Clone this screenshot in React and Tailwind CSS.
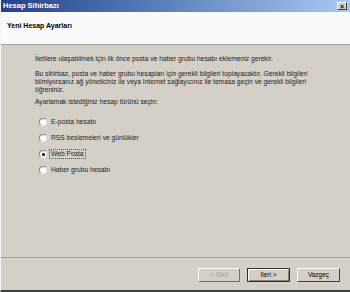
import React, { useState } from 'react';

const OPTIONS = [
  { value: 'email', label: 'E-posta hesabı' },
  { value: 'rss', label: 'RSS beslemeleri ve günlükler' },
  { value: 'web', label: 'Web Posta' },
  { value: 'news', label: 'Haber grubu hesabı' },
];

const Radio = ({ checked }) => (
  <span className="w-[8px] h-[8px] rounded-full bg-white border border-[#808080] border-r-[#e8e8e8] border-b-[#e8e8e8] flex items-center justify-center shrink-0">
    {checked && <span className="w-[3px] h-[3px] rounded-full bg-black" />}
  </span>
);

const App = () => {
  const [selected, setSelected] = useState('web');

  return (
    <div
      className="w-[350px] h-[292px] bg-[#d4d0c8] flex flex-col text-black border-b-2 border-b-[#404040] border-l border-l-[#f4f4f4]"
      style={{ fontFamily: '"Liberation Sans", Arial, sans-serif' }}
    >
      {/* Title bar */}
      <div className="h-[12px] bg-gradient-to-r from-[#23428a] to-[#a9caf0] flex items-center justify-between pl-[2px] pr-[3px]">
        <span className="text-[7.5px] font-bold text-white leading-none">Hesap Sihirbazı</span>
        <span className="w-[10px] h-[8px] bg-[#d4d0c8] border border-white border-r-[#404040] border-b-[#404040] flex items-center justify-center text-[7px] font-bold leading-none">
          ×
        </span>
      </div>

      {/* Header */}
      <div className="h-[33px] bg-[#fbfbfb] border-b border-b-[#a0a0a0] pl-[6px] pt-[10px] text-[7px] font-bold leading-[8px]">
        Yeni Hesap Ayarları
      </div>

      {/* Body */}
      <div className="flex-1 pl-[34px] pr-[38px] pt-[10px] text-[6.7px] leading-[8px] text-[#222]">
        <p>İletilere ulaşabilmek için ilk önce posta ve haber grubu hesabı eklemeniz gerekir.</p>
        <p className="mt-[7px]">
          Bu sihirbaz, posta ve haber grubu hesapları için gerekli bilgileri toplayacaktır. Gerekli bilgileri
          bilmiyorsanız ağ yöneticiniz ile veya Internet sağlayıcınız ile temasa geçin ve gerekli bilgileri
          öğreniniz.
        </p>
        <p className="mt-[4px]">Ayarlamak istediğiniz hesap türünü seçin:</p>

        <div className="mt-[12px] pl-[4px] flex flex-col gap-[8px]">
          {OPTIONS.map((o) => (
            <button
              key={o.value}
              type="button"
              onClick={() => setSelected(o.value)}
              className="flex items-center gap-[3px] text-left"
            >
              <Radio checked={selected === o.value} />
              <span
                className={`px-[1px] ${
                  selected === o.value ? 'outline outline-1 outline-dotted outline-[#555]' : ''
                }`}
              >
                {o.label}
              </span>
            </button>
          ))}
        </div>
      </div>

      {/* Footer */}
      <div className="h-[33px] border-t border-t-[#a0a0a0] flex items-center justify-end gap-[7px] pr-[10px] pt-[2px]">
        <button className="w-[42px] h-[14px] bg-[#d4d0c8] border border-white border-r-[#707070] border-b-[#707070] text-[6.5px] text-[#9a9a9a]">
          &lt; Geri
        </button>
        <button className="w-[43px] h-[14px] bg-[#d4d0c8] border border-[#303030] text-[6.5px] shadow-[inset_1px_1px_0_#fff,inset_-1px_-1px_0_#808080]">
          İleri &gt;
        </button>
        <button className="w-[43px] h-[14px] bg-[#d4d0c8] border border-white border-r-[#404040] border-b-[#404040] text-[6.5px]">
          Vazgeç
        </button>
      </div>
    </div>
  );
};

export default App;
